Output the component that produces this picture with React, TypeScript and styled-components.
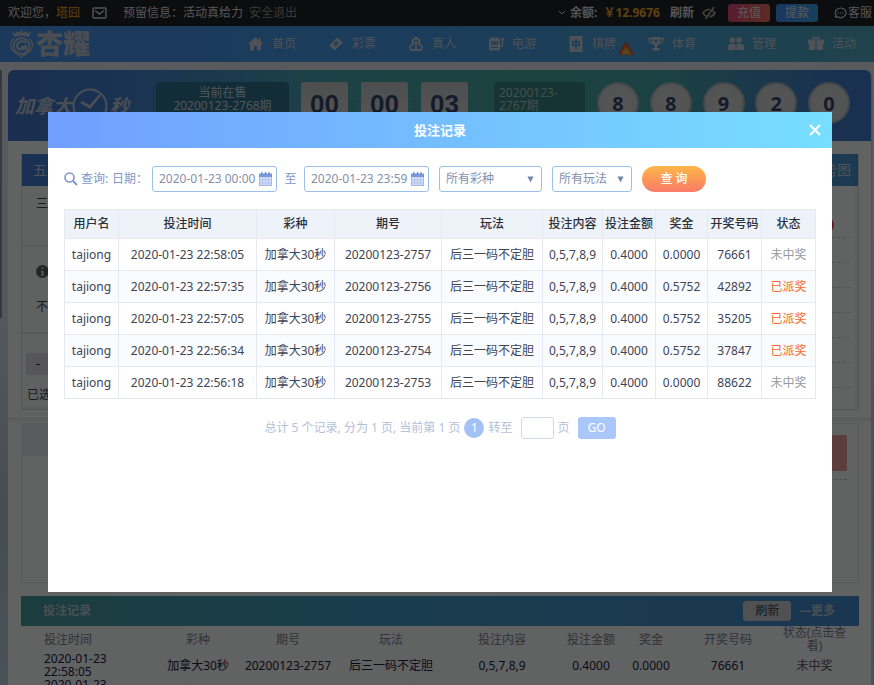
import React from "react";
import styled, { createGlobalStyle } from "styled-components";

const GlobalStyle = createGlobalStyle`
  * { box-sizing: border-box; }
  html, body, #root { height: 100%; }
  body {
    margin: 0;
    overflow: hidden;
    font: 12px/16px "Noto Sans", "Noto Sans CJK SC", sans-serif;
    color: #3d4457;
    background: linear-gradient(180deg, #dfe1ea 0%, #d8dce8 45%, #aebfd2 75%, #b8cbe0 100%);
  }
  button, input, select { font: inherit; margin: 0; }
  a { color: inherit; text-decoration: none; }
`;

const Page = styled.div`
  min-height: 100vh;
`;

/* ---------- top bar ---------- */

const TopBar = styled.header`
  display: flex;
  align-items: center;
  height: 26px;
  padding-left: 8px;
  color: #d6d6d6;
  background: #1d2126;
  white-space: nowrap;
`;
const Gold = styled.span`
  color: #e8a32c;
`;
const MailLink = styled.a`
  display: flex;
  margin: 0 16px 0 12px;
`;
const LogoutLink = styled.a`
  margin-left: 6px;
  color: #8d8d8d;
`;
const Wallet = styled.div`
  display: flex;
  align-items: center;
  margin-left: auto;
  font-weight: 700;
  gap: 4px;
`;
const PlainButton = styled.button`
  display: flex;
  padding: 0;
  border: 0;
  background: none;
  color: inherit;
  font-weight: inherit;
`;
const TopActions = styled.div`
  display: flex;
  align-items: center;
  gap: 6px;
  margin: 0 16px 0 8px;
`;
const PillButton = styled.button<{ $tone: "red" | "blue" }>`
  width: 42px;
  height: 18px;
  padding: 0;
  border: 0;
  border-radius: 3px;
  line-height: 18px;
  color: #e0e0e0;
  background: ${(p) =>
    p.$tone === "red"
      ? "linear-gradient(100deg, #d8457b, #e8705a)"
      : "linear-gradient(100deg, #3f8df0, #3a9fe0)"};
`;
const Reveal = styled(PlainButton)`
  margin-right: 6px;
`;
const WalletGroup = styled.div`
  display: flex;
  align-items: center;
  gap: 6px;
  margin-right: 6px;
`;
const ServiceLink = styled.a`
  display: flex;
  align-items: center;
  gap: 1px;
  margin-right: 2px;
`;

/* ---------- navigation ---------- */

const NavBar = styled.div`
  display: flex;
  align-items: center;
  height: 36px;
  padding-left: 8px;
  color: #c2cbd4;
  background: linear-gradient(90deg, #4890e6 0%, #4499e4 45%, #4a9fd8 75%, #4fa6bd 100%);
`;
const LogoLink = styled.a`
  display: flex;
  flex: 0 0 88px;
`;
const NavList = styled.nav`
  display: flex;
  flex: 0 0 auto;
  margin-left: auto;
  margin-right: -14px;
`;
const NavItem = styled.a`
  display: flex;
  align-items: center;
  flex: 0 0 80px;
  gap: 8px;
  white-space: nowrap;
`;
const Flame = styled.span`
  display: flex;
  margin: 8px 0 0 -5px;
`;

/* ---------- draw banner ---------- */

const Shell = styled.main`
  margin: 8px 2px 0 8px;
  min-height: 640px;
  border-radius: 6px 6px 0 0;
  background: #f3f4f5;
  border-right: 1px solid #c6cad2;
`;
const Banner = styled.section`
  display: flex;
  align-items: flex-start;
  height: 71px;
  padding: 12px 21px 0 7px;
  overflow: hidden;
  border-radius: 6px 6px 0 0;
  background: linear-gradient(90deg, #4275c8 0%, #4180cc 14%, #48a6b0 38%, #46a69e 60%, #46a3a8 76%, #4378c8 96%);
`;
const GameMark = styled.div`
  display: flex;
  align-items: center;
  flex: 0 0 141px;
  padding-top: 5px;
  color: #bcc4d2;
  font-size: 19px;
  line-height: 36px;
  font-weight: 700;
  font-style: italic;
`;
const IssueBox = styled.div<{ $tone: "now" | "last" }>`
  flex: 0 0 ${(p) => (p.$tone === "now" ? 133 : 91)}px;
  min-height: 59px;
  padding: 4px 5px;
  border-radius: 4px;
  line-height: 13px;
  text-align: ${(p) => (p.$tone === "now" ? "center" : "left")};
  color: ${(p) => (p.$tone === "now" ? "#c8d4d8" : "#a8c4c4")};
  background: ${(p) => (p.$tone === "now" ? "#31708c" : "#388280")};
`;
const Countdown = styled.div`
  display: flex;
  margin: 0 26px 0 12px;
`;
const FlipDigit = styled.span`
  width: 47px;
  height: 59px;
  border-radius: 3px;
  text-align: center;
  font: 700 26px/44px "Liberation Sans", sans-serif;
  color: #34486a;
  background: linear-gradient(180deg, #c0c2c4, #d0d0d0 50%, #b8babc 52%, #cacaca);
`;
const Colon = styled.span`
  width: 13px;
  text-align: center;
  font: 700 20px/44px "Liberation Sans", sans-serif;
  color: #5f9092;
`;
const Balls = styled.div`
  display: flex;
  justify-content: space-between;
  flex: 1;
  margin-left: 12px;
`;
const Ball = styled.span`
  width: 42px;
  height: 42px;
  border: 2px solid #a4b4b8;
  border-radius: 50%;
  text-align: center;
  font-size: 20px;
  line-height: 40px;
  font-weight: 700;
  color: #34486a;
  background: radial-gradient(circle, #d8d8da, #c8cacc);
`;

/* ---------- betting board ---------- */

const Board = styled.section`
  margin: 13px 12px 0 13px;
  border: 1px solid #d2d4d8;
  border-top: 0;
`;
const BoardTabs = styled.div`
  display: flex;
  align-items: center;
  justify-content: space-between;
  height: 32px;
  padding: 0 7px 0 11px;
  font-size: 14px;
  color: #c3cfdd;
  background: linear-gradient(90deg, #3f79cc, #4399d4 80%, #4492cc);
`;
const BoardBody = styled.div`
  display: flex;
  justify-content: space-between;
  height: 223px;
`;
const PlayColumn = styled.div`
  flex: 0 0 600px;
`;
const PlayBlock = styled.div<{ $h: number }>`
  height: ${(p) => p.$h}px;
  padding: 10px 14px;
  border-bottom: 2px solid #e2e4e8;
  background: #eff2f2;
`;
const Hint = styled.div`
  display: flex;
  padding: 8px 0 21px;
`;
const MinusButton = styled.button`
  display: block;
  width: 24px;
  height: 22px;
  margin: 9px 0 12px -10px;
  padding: 0;
  border: 0;
  background: #d6d7e0;
`;
const Chosen = styled.div`
  margin-left: -9px;
`;
const Results = styled.div`
  flex: 0 0 160px;
  padding: 27px 5px 0 0;
  border-right: 3px solid #eceef0;
`;
const ResultRow = styled.div`
  display: flex;
  align-items: center;
  justify-content: flex-end;
  height: 25px;
  padding-right: 16px;
  border-bottom: 1px dashed #cccfd4;
`;
const RedDot = styled.span`
  width: 16px;
  height: 16px;
  border-radius: 50%;
  background: #e8504a;
`;
const Divider = styled.hr`
  height: 3px;
  margin: 8px 0 2px;
  border: 0;
  border-top: 1px solid #d6d8dc;
  border-bottom: 1px solid #e0e2e4;
`;
const Basket = styled.section`
  margin: 0 12px 0 13px;
  height: 160px;
  border: 1px solid #dfe1e4;
  display: flex;
  justify-content: space-between;
`;
const BasketHead = styled.div`
  width: 600px;
  height: 32px;
  background: #dfe0e6;
`;
const BasketSide = styled.div`
  width: 180px;
  padding: 11px 11px 0 0;
`;
const BetButton = styled.button`
  display: block;
  width: 100%;
  height: 36px;
  border: 0;
  border-radius: 2px;
  background: #e4989a;
`;
const DashLine = styled.div`
  margin-top: 8px;
  border-top: 1px dashed #c4c6ca;
`;

/* ---------- recent bets ---------- */

const Recent = styled.section`
  margin: 13px 12px 0 13px;
`;
const RecentBar = styled.div`
  display: flex;
  align-items: center;
  height: 30px;
  padding: 0 24px 0 22px;
  font-weight: 700;
  color: #b8c6ce;
  background: linear-gradient(90deg, #44989c, #429ac0 40%, #4189cc);
`;
const RefreshButton = styled.button`
  width: 48px;
  height: 20px;
  margin: 0 8px 0 auto;
  padding: 0;
  border: 0;
  border-radius: 3px;
  font-weight: 400;
  line-height: 20px;
  color: #38414e;
  background: #c8cacc;
`;
const RecentTable = styled.table`
  width: 100%;
  table-layout: fixed;
  border-collapse: collapse;
  line-height: 13px;
  text-align: center;
  color: #1b2040;
  th { font-weight: 400; color: #7b7e90; }
  th, td { height: 26px; padding: 0; }
  th:first-child, td:first-child { padding: 0 36px 0 23px; text-align: left; }
  th:last-child { padding: 0 10px 0 2px; }
  td:last-child { padding-right: 8px; color: #55565c; }
`;
const SideTab = styled.aside`
  position: fixed;
  left: 0;
  top: 70px;
  width: 2px;
  height: 248px;
  background: #8b8fa0;
`;

/* ---------- dialog ---------- */

const Shade = styled.div`
  position: fixed;
  inset: 0;
  z-index: 10;
  padding: 112px 42px 0 48px;
  background: rgba(0, 0, 0, 0.6);
`;
const Dialog = styled.section`
  min-height: 480px;
  background: #fff;
`;
const DialogHead = styled.header`
  display: grid;
  grid-template-columns: 34px 1fr 34px;
  align-items: center;
  height: 36px;
  color: #fff;
  background: linear-gradient(90deg, #719eff, #77deff);
`;
const DialogTitle = styled.h2`
  margin: 0;
  grid-column: 2;
  text-align: center;
  font-size: 13px;
  line-height: 16px;
`;
const CloseButton = styled.button`
  display: flex;
  justify-content: center;
  padding: 0;
  border: 0;
  color: #fff;
  background: none;
`;
const DialogBody = styled.div`
  padding: 18px 16px;
`;
const Filters = styled.form`
  display: flex;
  align-items: center;
  height: 26px;
  margin-bottom: 17px;
  color: #7d97cc;
  white-space: nowrap;
`;
const FilterTitle = styled.span`
  display: flex;
  align-items: center;
  gap: 3px;
  width: 48px;
`;
const DateLabel = styled.label`
  width: 40px;
`;
const DateField = styled.span`
  display: flex;
  align-items: center;
  width: 125px;
  height: 26px;
  padding: 0 4px 0 6px;
  border: 1px solid #9dc0ea;
  border-radius: 3px;
`;
const DateInput = styled.input`
  flex: 1;
  min-width: 0;
  padding: 0;
  border: 0;
  outline: 0;
  color: #8490ac;
  background: none;
`;
const ToLabel = styled.label`
  width: 27px;
  text-align: center;
`;
const SelectWrap = styled.span<{ $w: number }>`
  display: grid;
  grid-template-columns: 1fr 14px;
  align-items: center;
  width: ${(p) => p.$w}px;
  height: 26px;
  margin-left: 10px;
  border: 1px solid #9dc0ea;
  border-radius: 3px;
`;
const Select = styled.select`
  grid-area: 1 / 1 / 2 / 3;
  width: 100%;
  height: 24px;
  padding: 0 0 0 6px;
  border: 0;
  outline: 0;
  appearance: none;
  color: #8490ac;
  background: none;
`;
const Arrow = styled.svg`
  grid-area: 1 / 2;
  pointer-events: none;
`;
const QueryButton = styled.button`
  width: 64px;
  height: 26px;
  margin-left: 10px;
  padding: 0;
  border: 0;
  border-radius: 13px;
  font-weight: 500;
  color: #fff;
  background: linear-gradient(180deg, #ffb648, #fb7b69);
`;
const RecordTable = styled.table`
  width: 100%;
  table-layout: fixed;
  border-collapse: collapse;
  text-align: center;
  white-space: nowrap;
  th, td { height: 32px; padding: 0; border: 1px solid #e6e9f3; }
  th { height: 29px; font-weight: 500; color: #2c2f38; background: #eef2f9; }
  tbody tr:nth-child(even) { background: #fafbfc; }
`;
const Status = styled.td<{ $won: boolean }>`
  color: ${(p) => (p.$won ? "#f46a26" : "#999")};
`;
const Pager = styled.div`
  display: flex;
  align-items: center;
  justify-content: center;
  margin-top: 18px;
  color: #b4c0da;
  white-space: nowrap;
`;
const PageDot = styled.a`
  width: 20px;
  height: 20px;
  margin: 0 4px;
  border-radius: 50%;
  text-align: center;
  line-height: 20px;
  color: #fff;
  background: #a3c1f6;
`;
const PageInput = styled.input`
  width: 33px;
  height: 22px;
  margin: 0 4px 0 8px;
  padding: 0 4px;
  border: 1px solid #d2d8e6;
  border-radius: 3px;
`;
const GoButton = styled.button`
  width: 38px;
  height: 22px;
  margin-left: 8px;
  padding: 0;
  border: 0;
  border-radius: 3px;
  color: #fff;
  background: #a9c7fa;
`;

/* ---------- icons ---------- */

const Icon = ({ children, size = 16, box = 16 }: { children: React.ReactNode; size?: number; box?: number }) => (
  <svg width={size} height={size} viewBox={`0 0 ${box} ${box}`} fill="currentColor" aria-hidden="true">
    {children}
  </svg>
);

const stroke = { fill: "none", stroke: "currentColor", strokeWidth: 1.4 };

const navIcons: Record<string, React.ReactNode> = {
  首页: <path d="M7.500 1 0 8h2v6.500h4V10h3v4.500h4V8h2l-2-2V2.500h-2v1.700z" />,
  彩票: (
    <path d="M1 9.500 9.500 1.500 11.500 3.300a1 1 0 0 0 1.200 1.200L15 6.800 6.500 14.500l-2-1.800a1 1 0 0 0-1.200-1.200zM10 5.800 7.800 5 5.500 8.200 7 8.500 6.200 11 10.500 7.600 8.700 7z" fillRule="evenodd" />
  ),
  真人: (
    <>
      <path d="M4.700 9V5.500a3.300 3.300 0 0 1 6.600 0V9" {...stroke} strokeWidth={2.200} />
      <path d="M5 8.500 2.800 9.800A2.300 2.300 0 0 0 4 14h8a2.300 2.300 0 0 0 1.200-4.200L11 8.500" {...stroke} strokeWidth={1.800} />
      <path d="M8 4.500 10 7 8 11 6 7zM7 11h2v3H7z" />
    </>
  ),
  电游: (
    <>
      <path d="M1 4.500A3 3 0 0 1 4 1.500h5a3 3 0 0 1 3 3v9l-1 1H2l-1-1zM3 5v4h7V5zM3 11v1h7v-1z" fillRule="evenodd" />
      <path d="M4 6h1.200M4 8h1.200M6 6h1.200M6 8h1.200M8 6h1.200M8 8h1.200" stroke="currentColor" />
      <path d="M12 10h2.500V4" {...stroke} />
      <circle cx="14.500" cy="3" r="1.500" />
    </>
  ),
  棋牌: (
    <path d="M1.500 0h13v16h-13zM7.200 3v2H4v5h3.200v3.500h1.600V10H12V5H8.800V3zM5.500 6.500h1.700v2H5.500zM8.800 6.500h1.700v2H8.800z" fillRule="evenodd" />
  ),
  体育: (
    <>
      <path d="M4 1h8v4c0 3-1.500 5-4 5S4 8 4 5zM8 2.500 7.300 4H5.800L7 5.100 6.600 6.800 8 5.900l1.400.9L9 5.100 10.200 4H8.700z" fillRule="evenodd" />
      <path d="M4 2.500H1C1 6 2.500 7.500 5 7.500M12 2.500h3c0 3.500-1.500 5-4 5" {...stroke} />
      <path d="M7 9h2v3h2.500v2.500h-7V12H7z" />
    </>
  ),
  管理: (
    <>
      <circle cx="4.500" cy="4" r="2.700" />
      <circle cx="11" cy="4" r="2.700" />
      <path d="M0 14v-3.500L1.500 8h6v6zM8.500 14V8h6l1.500 2.500V14z" />
    </>
  ),
  活动: (
    <>
      <path d="M0 3.500h7.500V14H1V8H0zM8.500 3.500H16V8h-1v6H8.500z" />
      <path d="M5 3.500C4 1 6.500 0 8 3c1.500-3 4-2 3 .5" {...stroke} />
    </>
  ),
};

const Crest = () => (
  <svg width="86" height="32" viewBox="0 0 86 32" fill="none" stroke="#b8c2cc" aria-label="杏耀">
    <path d="m4 3.500 3.500 2L9 3l3 2L13.500.5 15 5l3-2 1.500 2.500L23 3.500 21 9q-7.500-3-15 0z" fill="#b8c2cc" stroke="none" />
    <path d="M6 10.500C1 15 2 20 5 23l8.500 6L22 23c3-3 4-8-1-12.500" strokeWidth="1.200" />
    <circle cx="13.500" cy="18" r="8" strokeWidth="1.800" />
    <path d="M18 14.500c-5-3-9 0-9 3.500s5 5 8 1h-4M18 17v5" strokeWidth="2.200" />
    <text x="28" y="26" fontFamily="Noto Sans CJK SC, sans-serif" fontSize="27" fontWeight="900" fill="#b8c2cc" stroke="none">
      杏耀
    </text>
  </svg>
);

const Clock = () => (
  <svg width="38" height="38" viewBox="0 0 38 38" fill="none" stroke="#bcc4d2" strokeWidth="2" aria-hidden="true">
    <circle cx="18" cy="19" r="16.500" />
    <path d="m9 15 9 5L28 8" strokeWidth="2.600" />
    <text x="11" y="35" fontFamily="Liberation Sans, sans-serif" fontSize="13" fontWeight="700" fontStyle="normal" fill="#bcc4d2" stroke="none">
      30
    </text>
  </svg>
);

const Calendar = () => (
  <svg width="13" height="14" viewBox="0 0 13 14" aria-hidden="true">
    <path d="M0 2h13v12H0z" fill="#d5e0f8" />
    <path d="M0 1.500h13V5H0z" fill="#7899e0" />
    <path d="M3 0v3M6.500 0v3M10 0v3" stroke="#6485d0" strokeWidth="1.200" />
    <path d="M0 8h13M0 11h13M3.500 5v9M6.500 5v9M9.500 5v9" stroke="#a9c0ee" strokeWidth=".8" />
    <path d="M.5 5v8.500h12V5" fill="none" stroke="#a0b9ec" />
  </svg>
);

const DownArrow = () => (
  <Arrow width="7" height="7" viewBox="0 0 8 8" aria-hidden="true">
    <path d="M.5.5h7L4 7.500z" fill="#7687ad" />
  </Arrow>
);

/* ---------- data ---------- */

const columns: [string, number][] = [
  ["用户名", 54],
  ["投注时间", 138],
  ["彩种", 78],
  ["期号", 107],
  ["玩法", 101],
  ["投注内容", 60],
  ["投注金额", 53],
  ["奖金", 52],
  ["开奖号码", 54],
  ["状态", 54],
];

const records = [
  { time: "2020-01-23 22:58:05", issue: "20200123-2757", prize: "0.0000", code: "76661" },
  { time: "2020-01-23 22:57:35", issue: "20200123-2756", prize: "0.5752", code: "42892" },
  { time: "2020-01-23 22:57:05", issue: "20200123-2755", prize: "0.5752", code: "35205" },
  { time: "2020-01-23 22:56:34", issue: "20200123-2754", prize: "0.5752", code: "37847" },
  { time: "2020-01-23 22:56:18", issue: "20200123-2753", prize: "0.0000", code: "88622" },
];

const recentColumns: [string, number][] = [
  ["投注时间", 135],
  ["彩种", 84],
  ["期号", 96],
  ["玩法", 110],
  ["投注内容", 112],
  ["投注金额", 66],
  ["奖金", 54],
  ["开奖号码", 100],
  ["状态(点击查看)", 81],
];

const statusOf = (prize: string) => (prize === "0.0000" ? "未中奖" : "已派奖");

export default function App() {
  return (
    <>
      <GlobalStyle />
      <Page>
        <TopBar>
          <span>欢迎您，</span>
          <Gold>塔囧</Gold>
          <MailLink href="#mail" aria-label="站内信">
            <svg width="15" height="12" viewBox="0 0 15 12" {...stroke} aria-hidden="true">
              <rect x="1" y="1" width="13" height="10" rx="1" />
              <path d="m3 3.500 4.500 3.500L12 3.500" />
            </svg>
          </MailLink>
          <span>预留信息：活动真给力</span>
          <LogoutLink href="#logout">安全退出</LogoutLink>
          <Wallet>
            <svg width="8" height="6" viewBox="0 0 8 6" {...stroke} strokeWidth="1" aria-hidden="true">
              <path d="m1 1 3 3 3-3" />
            </svg>
            <WalletGroup>
              余额:
              <Gold>￥12.9676</Gold>
            </WalletGroup>
            <PlainButton type="button">刷新</PlainButton>
          </Wallet>
          <TopActions>
            <Reveal type="button" aria-label="隐藏余额">
              <svg width="14" height="16" viewBox="0 0 14 16" fill="none" stroke="#b5ad98" strokeWidth="1.500" aria-hidden="true">
                <path d="M5 11.500C3 11 2 10 1 8c2-3 3.500-4 7-3.500M10 5.500C11.500 6 12 7 13 8c-1.500 2.500-3 3.500-5.500 3.700M12 2 3.500 14M8.500 7l-2 2.500" />
              </svg>
            </Reveal>
            <PillButton type="button" $tone="red">充值</PillButton>
            <PillButton type="button" $tone="blue">提款</PillButton>
          </TopActions>
          <ServiceLink href="#service">
            <svg width="13" height="12" viewBox="0 0 13 12" {...stroke} strokeWidth="1.200" aria-hidden="true">
              <path d="M6.500 1a5.500 4.800 0 1 1-3 8.800L1.500 10l.5-2A5.500 4.800 0 0 1 6.500 1z" />
              <path d="M3.500 6h1.300M5.900 6h1.300M8.300 6h1.300" />
            </svg>
            客服
          </ServiceLink>
        </TopBar>

        <NavBar>
          <LogoLink href="#home"><Crest /></LogoLink>
          <NavList>
            {Object.keys(navIcons).map((name) => (
              <NavItem key={name} href={`#${name}`}>
                <Icon>{navIcons[name]}</Icon>
                {name}
                {name === "棋牌" && (
                  <Flame>
                    <svg width="14" height="15" viewBox="0 0 14 15" aria-hidden="true">
                      <path d="M7 0c1 3 4 4 4.500 8L14 11v3H0v-3l2-3C3 4 6 3 7 0z" fill="#d0583e" />
                      <path d="M7 4c0 3 2.500 4 3 6l2.500 3.500h-11L4 10c.5-2 3-3 3-6z" fill="#dbaa3c" />
                    </svg>
                  </Flame>
                )}
              </NavItem>
            ))}
          </NavList>
        </NavBar>

        <Shell>
          <Banner>
            <GameMark>加拿大<Clock />秒</GameMark>
            <IssueBox $tone="now">当前在售<br />20200123-2768期</IssueBox>
            <Countdown>
              <FlipDigit>00</FlipDigit>
              <Colon>:</Colon>
              <FlipDigit>00</FlipDigit>
              <Colon>:</Colon>
              <FlipDigit>03</FlipDigit>
            </Countdown>
            <IssueBox $tone="last">20200123-<br />2767期</IssueBox>
            <Balls>
              {["8", "8", "9", "2", "0"].map((n, i) => (
                <Ball key={i}>{n}</Ball>
              ))}
            </Balls>
          </Banner>

          <Board>
            <BoardTabs>
              <span>五星</span>
              <a href="#trend">走势图</a>
            </BoardTabs>
            <BoardBody>
              <PlayColumn>
                <PlayBlock $h={61}>三星</PlayBlock>
                <PlayBlock $h={87}>
                  <Hint>
                    <Icon size={13}>
                      <path d="M8 0a8 8 0 1 0 0 16A8 8 0 0 0 8 0zM7 3h2v2H7zM6 7h3v5h1v1H6v-1h1V8H6z" fillRule="evenodd" fill="#5a5e68" />
                    </Icon>
                  </Hint>
                  不定位
                </PlayBlock>
                <PlayBlock $h={75}>
                  <MinusButton type="button">-</MinusButton>
                  <Chosen>已选</Chosen>
                </PlayBlock>
              </PlayColumn>
              <Results>
                {[0, 1, 2, 3, 4, 5, 6].map((i) => (
                  <ResultRow key={i}>{i === 0 && <RedDot />}</ResultRow>
                ))}
              </Results>
            </BoardBody>
          </Board>
          <Divider />
          <Basket>
            <BasketHead />
            <BasketSide>
              <BetButton type="button" aria-label="投注" />
              <DashLine />
            </BasketSide>
          </Basket>

          <Recent>
            <RecentBar>
              投注记录
              <RefreshButton type="button">刷新</RefreshButton>
              <a href="#more">---更多</a>
            </RecentBar>
            <RecentTable>
              <colgroup>
                {recentColumns.map(([name, w]) => <col key={name} width={w} />)}
              </colgroup>
              <thead>
                <tr>{recentColumns.map(([name]) => <th key={name}>{name}</th>)}</tr>
              </thead>
              <tbody>
                {records.slice(0, 2).map((r) => (
                  <tr key={r.issue}>
                    <td>{r.time}</td>
                    <td>加拿大30秒</td>
                    <td>{r.issue}</td>
                    <td>后三一码不定胆</td>
                    <td>0,5,7,8,9</td>
                    <td>0.4000</td>
                    <td>{r.prize}</td>
                    <td>{r.code}</td>
                    <td>{statusOf(r.prize)}</td>
                  </tr>
                ))}
              </tbody>
            </RecentTable>
          </Recent>
        </Shell>
        <SideTab />
      </Page>

      <Shade>
        <Dialog role="dialog" aria-labelledby="dialog-title">
          <DialogHead>
            <DialogTitle id="dialog-title">投注记录</DialogTitle>
            <CloseButton type="button" aria-label="关闭">
              <svg width="12" height="12" viewBox="0 0 12 12" stroke="currentColor" strokeWidth="2" aria-hidden="true">
                <path d="m1 1 10 10M11 1 1 11" />
              </svg>
            </CloseButton>
          </DialogHead>
          <DialogBody>
            <Filters onSubmit={(e) => e.preventDefault()}>
              <FilterTitle>
                <svg width="14" height="14" viewBox="0 0 14 14" {...stroke} strokeWidth="1.600" aria-hidden="true">
                  <circle cx="5.500" cy="5.500" r="4.500" />
                  <path d="m9 9 4 4" strokeWidth="2" />
                </svg>
                查询:
              </FilterTitle>
              <DateLabel htmlFor="from">日期：</DateLabel>
              <DateField>
                <DateInput id="from" type="text" defaultValue="2020-01-23 00:00" />
                <Calendar />
              </DateField>
              <ToLabel htmlFor="to">至</ToLabel>
              <DateField>
                <DateInput id="to" type="text" defaultValue="2020-01-23 23:59" />
                <Calendar />
              </DateField>
              <SelectWrap $w={103}>
                <Select aria-label="彩种"><option>所有彩种</option></Select>
                <DownArrow />
              </SelectWrap>
              <SelectWrap $w={80}>
                <Select aria-label="玩法"><option>所有玩法</option></Select>
                <DownArrow />
              </SelectWrap>
              <QueryButton type="submit">查 询</QueryButton>
            </Filters>

            <RecordTable>
              <colgroup>
                {columns.map(([name, w]) => <col key={name} width={w} />)}
              </colgroup>
              <thead>
                <tr>{columns.map(([name]) => <th key={name}>{name}</th>)}</tr>
              </thead>
              <tbody>
                {records.map((r) => (
                  <tr key={r.issue}>
                    <td>tajiong</td>
                    <td>{r.time}</td>
                    <td>加拿大30秒</td>
                    <td>{r.issue}</td>
                    <td>后三一码不定胆</td>
                    <td>0,5,7,8,9</td>
                    <td>0.4000</td>
                    <td>{r.prize}</td>
                    <td>{r.code}</td>
                    <Status $won={r.prize !== "0.0000"}>{statusOf(r.prize)}</Status>
                  </tr>
                ))}
              </tbody>
            </RecordTable>

            <Pager>
              <span>总计 5 个记录, 分为 1 页, 当前第 1 页</span>
              <PageDot href="#page-1">1</PageDot>
              <label htmlFor="page">转至</label>
              <PageInput id="page" type="text" />
              <span>页</span>
              <GoButton type="button">GO</GoButton>
            </Pager>
          </DialogBody>
        </Dialog>
      </Shade>
    </>
  );
}
